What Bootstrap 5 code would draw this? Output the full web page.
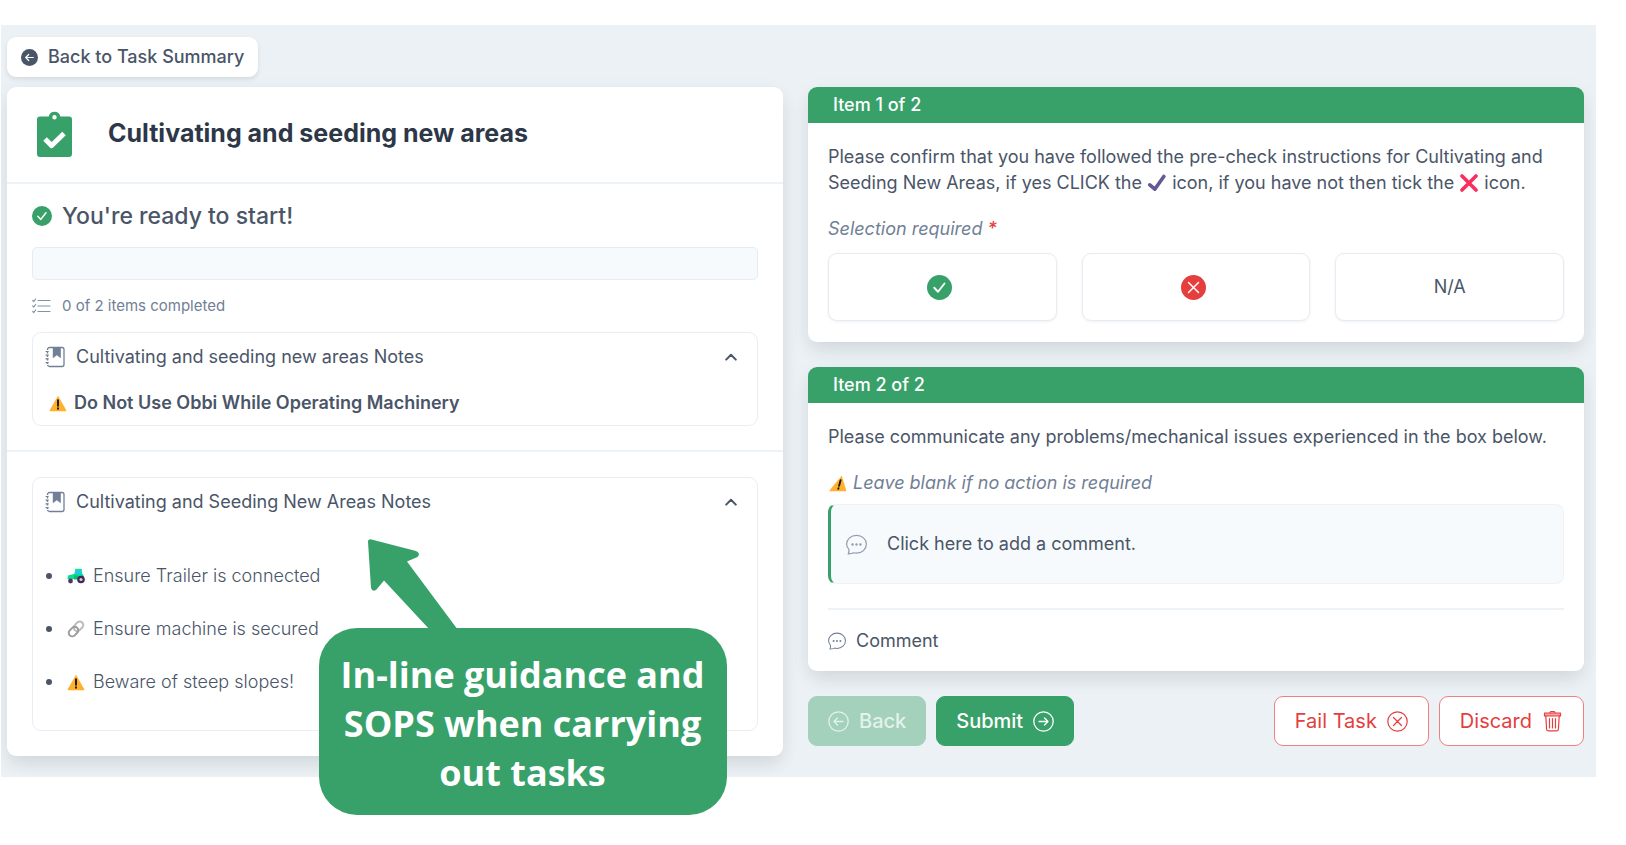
<!DOCTYPE html>
<html lang="en">
<head>
<meta charset="utf-8">
<meta name="viewport" content="width=device-width, initial-scale=1">
<title>Task: Cultivating and seeding new areas</title>
<link rel="stylesheet" href="https://cdn.jsdelivr.net/npm/bootstrap@5.3.0/dist/css/bootstrap.min.css">
<style>
:root { --brand: #38a169; --danger: #e53e3e; --ink: #4a5568; --ink-dark: #2d3748; --ink-soft: #718096; --line: #edf2f7; }
body { font-family: Inter, "Liberation Sans", sans-serif; font-size: 18px; line-height: 26px; color: var(--ink); background: #fff; padding-top: 25px; }
svg { display: block; flex: none; }
.stage { position: relative; margin: 0 30px 0 1px; }
.workspace { padding: 12px 12px 21px 6px; background: #ecf1f5; overflow: hidden; }
.back-link { background: #fff; color: var(--ink); font-weight: 500; padding: 7px 14px; border-radius: 9px; gap: 10px; box-shadow: 0 2px 4px rgba(40,50,60,.12); text-decoration: none; margin-bottom: 10px; }
.split { --bs-gutter-x: 25px; }
.panel { background: #fff; border-radius: 9px; box-shadow: 0 10px 18px -3px rgba(40,50,60,.1), 0 4px 20px rgba(40,50,60,.05); }
.panel-title { font-size: 25px; line-height: 32px; font-weight: 700; color: var(--ink-dark); margin: 0; }
.title-row { padding: 24px 30px 25px; gap: 36px; }
.title-row h1 { padding-bottom: 3px; }
.rule { border-bottom: 2px solid var(--line); }
.section-a { padding: 17px 25px 24px; }
.section-b { padding: 25px 25px 25px; }
.ready { font-size: 23px; line-height: 30px; font-weight: 500; gap: 10px; margin: 0 0 16px; }
.track { height: 33px; border-radius: 5px; background: #f7fafc; border: 1px solid #e6ecf2; }
.count { font-size: 15px; line-height: 20px; color: var(--ink-soft); gap: 11px; margin: 16px 0 16px; }
.note { border: 1px solid #e8eef5; border-radius: 9px; }
.note-head { background: none; border: 0; padding: 11px 20px 11px 12px; color: var(--ink); gap: 11px; line-height: 26px; }
.note-warn { padding: 9px 16px 9px; gap: 7px; font-weight: 600; }
.checks { list-style: none; margin: 0; padding: 37px 13px 35px; gap: 27px; font-weight: 300; }
.checks li { gap: 8px; }
.checks li::before { content: ""; width: 6px; height: 6px; border-radius: 50%; background: var(--ink); margin-right: 7px; }
.item { margin-bottom: 25px; }
.item-head { background: var(--brand); color: #fff; font-weight: 500; font-size: 18px; line-height: 36px; padding: 0 25px; border-radius: 9px 9px 0 0; margin: 0; }
.item-body { padding: 21px 20px 21px; }
.item-foot { padding-bottom: 17px; }
.item-body p { margin: 0; }
.item-body p svg { display: inline-block; vertical-align: -3px; }
.item-body .hint { font-style: italic; color: var(--ink-soft); padding-top: 20px; margin-bottom: 8px; }
.star { color: var(--danger); font-weight: 500; }
.choices { padding-top: 3px; }
.choice { height: 68px; background: #fff; border: 1px solid #e6ecf3; border-radius: 9px; box-shadow: 0 1px 3px rgba(40,60,80,.07); color: var(--ink); }
.choice svg { margin-right: 5px; }
.comment-box { background: #f7fafc; border: 1px solid #eef3f7; border-left: 3px solid var(--brand); border-radius: 8px; height: 80px; gap: 20px; padding: 0 15px; color: var(--ink); }
.comment-rule { padding-top: 24px; margin-bottom: 18px; }
.comment-link { background: none; border: 0; padding: 0; gap: 10px; color: var(--ink); }
.actions { gap: 10px; }
.act { --bs-btn-font-size: 20px; --bs-btn-line-height: 30px; --bs-btn-font-weight: 500; --bs-btn-padding-y: 9px; --bs-btn-padding-x: 19px; --bs-btn-border-radius: 9px; gap: 10px; }
.act-go { --bs-btn-bg: #38a169; --bs-btn-border-color: #38a169; --bs-btn-color: #fff; --bs-btn-hover-bg: #2f855a; --bs-btn-hover-color: #fff; --bs-btn-disabled-bg: #a3d1bc; --bs-btn-disabled-border-color: #a3d1bc; --bs-btn-disabled-color: #e4f2ec; --bs-btn-disabled-opacity: 1; }
.act-stop { --bs-btn-bg: #fff; --bs-btn-border-color: #ee8080; --bs-btn-color: #e53e3e; --bs-btn-hover-bg: #fff5f5; --bs-btn-hover-color: #c53030; --bs-btn-font-weight: 400; --bs-btn-padding-x: 20px; }
.callout-tip { position: absolute; right: calc(50% + 72px); bottom: -38px; z-index: 2; background: var(--brand); color: #fff; border-radius: 38px; padding: 22px 22px 18px; font: 700 36px/49px "Open Sans", sans-serif; text-align: center; }
.callout-tip svg { position: absolute; left: 48px; bottom: calc(100% - 2px); }
.ln { fill: none; stroke: currentColor; stroke-linecap: round; stroke-linejoin: round; }
.ln-white { stroke: #fff; }
</style>
</head>
<body class="min-vh-100">
<svg width="0" height="0" class="position-absolute" aria-hidden="true">
  <symbol id="warn" viewBox="0 0 18 17"><path d="M9 .8 17.3 15.2q.4 1-.7 1H1.4q-1.100 0-.7-1Z" fill="#ffb02e"/><path d="M9 5.300v5.400M9 13.200v.500" stroke="#1c1508" stroke-width="1.900" stroke-linecap="round"/></symbol>
  <symbol id="book" viewBox="0 0 20 22"><rect x="2.500" y="1.500" width="16.500" height="19" rx="2" fill="#fff" stroke="#718096" stroke-width="1.300"/><path d="M2.500 4v15" stroke="#fff" stroke-width="2" stroke-dasharray="1.500 2"/><path d="M.6 5.500h3M.6 9.200h3M.6 12.900h3M.6 16.600h3" stroke="#718096" stroke-width="1.200"/><path d="M7.800 1.500h8v10.700l-4-3-4 3Z" fill="#718096"/></symbol>
  <symbol id="chat" viewBox="0 0 16 16"><circle cx="5" cy="8" r=".9" fill="currentColor"/><circle cx="8" cy="8" r=".9" fill="currentColor"/><circle cx="11" cy="8" r=".9" fill="currentColor"/><path class="ln" stroke-width=".9" d="M2.200 11.600C1.100 10.600.5 9.300.5 7.800.5 4 3.800 1 8 1s7.500 3 7.500 6.800-3.300 6.800-7.500 6.800c-.8 0-1.500-.1-2.200-.3-1 .5-2.300.8-4.100.9.5-1.200.7-2.400.5-3.600Z"/></symbol>
  <symbol id="tick" viewBox="0 0 20 20"><circle cx="10" cy="10" r="10" fill="#38a169"/><path class="ln ln-white" stroke-width="1.500" d="m5.800 10.200 3 3.200 5.200-6.600"/></symbol>
  <symbol id="up" viewBox="0 0 12 8"><path class="ln" stroke-width="2" d="M1.200 6.600 6 1.800l4.800 4.800"/></symbol>
</svg>

<main class="stage">
<div class="workspace">
  <a href="#" class="back-link d-inline-flex align-items-center">
    <svg width="17" height="17" viewBox="0 0 17 17"><circle cx="8.500" cy="8.500" r="8.500" fill="#4a5568"/><path class="ln ln-white" stroke-width="1.200" d="M12.300 8.500H4.700M7.700 5.500l-3 3 3 3"/></svg>
    Back to Task Summary
  </a>
  <div class="row split">
    <section class="col-6">
      <div class="panel">
        <header class="title-row rule d-flex align-items-center">
          <svg width="35" height="46" viewBox="0 0 35 46"><path fill="#38a169" fill-rule="evenodd" d="M3 5.500h8.700a5.900 5.900 0 0 1 11.600 0H32a3 3 0 0 1 3 3V43a3 3 0 0 1-3 3H3a3 3 0 0 1-3-3V8.500a3 3 0 0 1 3-3ZM17.500 4a2.200 2.200 0 1 0 0 4.400 2.200 2.200 0 0 0 0-4.400Z"/><path d="m8 28 6.700 6.600L27 22.400" fill="none" stroke="#fff" stroke-width="5" stroke-linejoin="round"/></svg>
          <h1 class="panel-title">Cultivating and seeding new areas</h1>
        </header>
        <div class="section-a rule">
          <h2 class="ready d-flex align-items-center"><svg width="20" height="20"><use href="#tick"/></svg>You're ready to start!</h2>
          <div class="track progress" role="progressbar" aria-label="Items completed" aria-valuenow="0" aria-valuemin="0" aria-valuemax="2"></div>
          <div class="count d-flex align-items-center">
            <svg width="19" height="16" viewBox="0 0 19 16" color="#8492a6"><path class="ln" stroke-width="1.200" d="M6 2.500h12M6 8h12M6 13.500h12M.8 2.500l1 1L3.600 1M.8 8l1 1 1.800-2.500M.8 13.500l1 1 1.800-2.500"/></svg>
            0 of 2 items completed
          </div>
          <div class="note">
            <button type="button" class="note-head d-flex w-100 align-items-center" aria-expanded="true"><svg width="20" height="22"><use href="#book"/></svg>Cultivating and seeding new areas Notes<svg class="ms-auto" width="12" height="8"><use href="#up"/></svg></button>
            <div class="note-warn d-flex align-items-center"><svg width="18" height="17"><use href="#warn"/></svg>Do Not Use Obbi While Operating Machinery</div>
          </div>
        </div>
        <div class="section-b">
          <div class="note">
            <button type="button" class="note-head d-flex w-100 align-items-center" aria-expanded="true"><svg width="20" height="22"><use href="#book"/></svg>Cultivating and Seeding New Areas Notes<svg class="ms-auto" width="12" height="8"><use href="#up"/></svg></button>
            <ul class="checks d-flex flex-column">
              <li class="d-flex align-items-center"><svg width="18" height="16" viewBox="0 0 18 16"><path d="M8.500 1h6l1 6H7Z" fill="#1fc9ea"/><path d="M8 .8h7v1.500H8Z" fill="#14e6a0"/><path d="M1 7.500 7 6h8.500l1.500 2v3H.5Z" fill="#05e08c"/><path d="M7 7.500h4v4H7Z" fill="#0bb878"/><circle cx="3.500" cy="13" r="2.400" fill="#533566"/><circle cx="14" cy="11.500" r="3.800" fill="#43284f"/><circle cx="14" cy="11.500" r="1.600" fill="#d9c9e0"/></svg>Ensure Trailer is connected</li>
              <li class="d-flex align-items-center"><svg width="18" height="18" viewBox="0 0 18 18"><g fill="none" stroke-width="2"><rect x="-5.300" y="-3.500" width="10.600" height="7" rx="3.500" transform="translate(11.500 6.300) rotate(-45)" stroke="#bdbdbd"/><rect x="-5.300" y="-3.500" width="10.600" height="7" rx="3.500" transform="translate(6.500 11.600) rotate(-45)" stroke="#9b9b9b"/></g></svg>Ensure machine is secured</li>
              <li class="d-flex align-items-center"><svg width="18" height="17"><use href="#warn"/></svg>Beware of steep slopes!</li>
            </ul>
          </div>
        </div>
      </div>
    </section>

    <section class="col-6">
      <article class="panel item">
        <h2 class="item-head">Item 1 of 2</h2>
        <div class="item-body">
          <p>Please confirm that you have followed the pre-check instructions for Cultivating and Seeding New Areas, if yes CLICK the <svg width="20" height="18" viewBox="0 0 20 18"><path d="m2.800 10.800 5 4.400L16.800 2.500" fill="none" stroke="#635994" stroke-width="3.600" stroke-linecap="round" stroke-linejoin="round"/></svg> icon, if you have not then tick the <svg width="20" height="18" viewBox="0 0 20 18"><path d="m3 2 14 14M17 2 3 16" stroke="#fb2d5e" stroke-width="3.600" stroke-linecap="round"/></svg> icon.</p>
          <p class="hint">Selection required <span class="star">*</span></p>
          <div class="choices row row-cols-3 split">
            <div><button type="button" class="choice w-100 d-flex align-items-center justify-content-center" aria-label="Yes"><svg width="25" height="25"><use href="#tick"/></svg></button></div>
            <div><button type="button" class="choice w-100 d-flex align-items-center justify-content-center" aria-label="No"><svg width="25" height="25" viewBox="0 0 26 26"><circle cx="13" cy="13" r="13" fill="#e53e3e"/><path class="ln ln-white" stroke-width="1.500" d="m7.800 7.800 10.400 10.400M18.200 7.800 7.800 18.200"/></svg></button></div>
            <div><button type="button" class="choice w-100 d-flex align-items-center justify-content-center">N/A</button></div>
          </div>
        </div>
      </article>
      <article class="panel item">
        <h2 class="item-head">Item 2 of 2</h2>
        <div class="item-body item-foot">
          <p>Please communicate any problems/mechanical issues experienced in the box below.</p>
          <p class="hint"><svg width="20" height="17" viewBox="0 0 20 17"><g transform="translate(5) skewX(-15)"><path d="M9 .8 17.300 15.200q.4 1-.7 1H1.400q-1.100 0-.7-1Z" fill="#ffb02e"/><path d="M9 5.300v5.400M9 13.200v.5" stroke="#1c1508" stroke-width="1.900" stroke-linecap="round"/></g></svg> Leave blank if no action is required</p>
          <button type="button" class="comment-box w-100 d-flex align-items-center"><svg width="21" height="21" color="#8f9bb0"><use href="#chat"/></svg>Click here to add a comment.</button>
          <div class="rule comment-rule"></div>
          <button type="button" class="comment-link d-flex align-items-center"><svg width="18" height="18" color="#718096"><use href="#chat"/></svg>Comment</button>
        </div>
      </article>
      <div class="actions d-flex">
        <button type="button" class="btn act act-go d-flex align-items-center" disabled><svg width="21" height="21" viewBox="0 0 21 21"><path class="ln" stroke-width="1.300" d="M10.500.8a9.700 9.700 0 1 1 0 19.400 9.700 9.700 0 0 1 0-19.400ZM15 10.500H6M9.500 7 6 10.500 9.500 14"/></svg>Back</button>
        <button type="button" class="btn act act-go d-flex align-items-center">Submit<svg width="21" height="21" viewBox="0 0 21 21"><path class="ln" stroke-width="1.300" d="M10.500.8a9.700 9.700 0 1 1 0 19.400 9.700 9.700 0 0 1 0-19.400ZM6 10.500h9M11.500 7l3.500 3.500-3.500 3.500"/></svg></button>
        <button type="button" class="btn act act-stop d-flex align-items-center ms-auto">Fail Task<svg width="21" height="21" viewBox="0 0 21 21"><path class="ln" stroke-width="1.200" d="M10.500.8a9.700 9.700 0 1 1 0 19.400 9.700 9.700 0 0 1 0-19.400ZM6.500 6.500l8 8M14.500 6.500l-8 8"/></svg></button>
        <button type="button" class="btn act act-stop d-flex align-items-center">Discard<svg width="21" height="21" viewBox="0 0 21 21"><g fill="none" stroke="currentColor" stroke-width="1.200" stroke-linecap="round" stroke-linejoin="round"><path d="M2.500 2h16v3h-16Z" fill="#f5a3a3"/><path d="M8 1.500 8.500.7h4l.5.8M3.800 5.200l.8 13q.1 1.600 1.600 1.600h8.600q1.500 0 1.600-1.600l.8-13" /><path d="M7.500 7.500v9.500M10.500 7.500v9.500M13.500 7.500v9.500"/></g></svg></button>
      </div>
    </section>
  </div>
</div>
<aside class="callout-tip">
  <svg width="92" height="92" viewBox="0 0 92 92"><path fill="#38a169" d="M1 4Q1 .5 4.500 1.400L49 13Q54 15 50.500 19L40 23.500 91 92H63L17 42.500 9.500 51.500Q5.500 54.500 4 50Z"/></svg>
  In-line guidance and<br>SOPS when carrying<br>out tasks
</aside>
</main>
<script src="https://cdn.jsdelivr.net/npm/bootstrap@5.3.0/dist/js/bootstrap.bundle.min.js"></script>
</body>
</html>
